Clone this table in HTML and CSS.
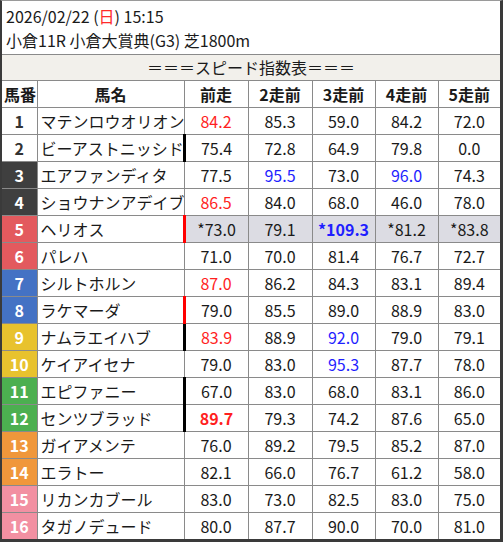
FILE: index.html
```html
<!DOCTYPE html>
<html lang="ja">
<head>
<meta charset="utf-8">
<link rel="stylesheet" href="styles.css">
</head>
<body>
<div class="frame">
  <div class="info">
    <div class="line">2026/02/22 (<span class="sun">日</span>) 15:15</div>
    <div class="line">小倉11R 小倉大賞典(G3) 芝1800m</div>
  </div>
  <table class="speed">
    <colgroup>
      <col class="c-no"><col class="c-name"><col class="c-v1"><col class="c-v2"><col class="c-v3"><col class="c-v4"><col class="c-v5">
    </colgroup>
    <thead>
      <tr class="caption-row"><td colspan="7">＝＝＝スピード指数表＝＝＝</td></tr>
      <tr class="head"><th class="h-no">馬番</th><th>馬名</th><th>前走</th><th>2走前</th><th>3走前</th><th>4走前</th><th>5走前</th></tr>
    </thead>
    <tbody>
      <tr><td class="no w1">1</td><td class="name">マテンロウオリオン</td><td class="red">84.2</td><td>85.3</td><td>59.0</td><td>84.2</td><td>72.0</td></tr>
      <tr><td class="no w1">2</td><td class="name">ビーアストニッシド</td><td class="mk-black">75.4</td><td>72.8</td><td>64.9</td><td>79.8</td><td>0.0</td></tr>
      <tr><td class="no w2">3</td><td class="name">エアファンディタ</td><td>77.5</td><td class="blue">95.5</td><td>73.0</td><td class="blue">96.0</td><td>74.3</td></tr>
      <tr><td class="no w2">4</td><td class="name">ショウナンアデイブ</td><td class="red">86.5</td><td>84.0</td><td>68.0</td><td>46.0</td><td>78.0</td></tr>
      <tr class="hl"><td class="no w3">5</td><td class="name">ヘリオス</td><td class="mk-red">*73.0</td><td>79.1</td><td class="blue bold">*109.3</td><td>*81.2</td><td>*83.8</td></tr>
      <tr><td class="no w3">6</td><td class="name">パレハ</td><td>71.0</td><td>70.0</td><td>81.4</td><td>76.7</td><td>72.7</td></tr>
      <tr><td class="no w4">7</td><td class="name">シルトホルン</td><td class="red">87.0</td><td>86.2</td><td>84.3</td><td>83.1</td><td>89.4</td></tr>
      <tr><td class="no w4">8</td><td class="name">ラケマーダ</td><td class="mk-red">79.0</td><td>85.5</td><td>89.0</td><td>88.9</td><td>83.0</td></tr>
      <tr><td class="no w5">9</td><td class="name">ナムラエイハブ</td><td class="red mk-black">83.9</td><td>88.9</td><td class="blue">92.0</td><td>79.0</td><td>79.1</td></tr>
      <tr><td class="no w5">10</td><td class="name">ケイアイセナ</td><td>79.0</td><td>83.0</td><td class="blue">95.3</td><td>87.7</td><td>78.0</td></tr>
      <tr><td class="no w6">11</td><td class="name">エピファニー</td><td class="mk-black">67.0</td><td>83.0</td><td>68.0</td><td>83.1</td><td>86.0</td></tr>
      <tr><td class="no w6">12</td><td class="name">センツブラッド</td><td class="red bold mk-black">89.7</td><td>79.3</td><td>74.2</td><td>87.6</td><td>65.0</td></tr>
      <tr><td class="no w7">13</td><td class="name">ガイアメンテ</td><td>76.0</td><td>89.2</td><td>79.5</td><td>85.2</td><td>87.0</td></tr>
      <tr><td class="no w7">14</td><td class="name">エラトー</td><td>82.1</td><td>66.0</td><td>76.7</td><td>61.2</td><td>58.0</td></tr>
      <tr><td class="no w8">15</td><td class="name">リカンカブール</td><td>83.0</td><td>73.0</td><td>82.5</td><td>83.0</td><td>75.0</td></tr>
      <tr><td class="no w8">16</td><td class="name">タガノデュード</td><td>80.0</td><td>87.7</td><td>90.0</td><td>70.0</td><td>81.0</td></tr>
    </tbody>
  </table>
</div>
</body>
</html>
```

FILE: styles.css
```css
* { box-sizing: border-box; }
html, body { margin: 0; padding: 0; background: #fff; }
body {
  font-family: "Noto Sans CJK JP", "Noto Sans", sans-serif;
  font-size: 16px;
  color: #1a1a1a;
}
.frame {
  width: 503px;
  height: 542px;
  border-top: 1px solid #9a9a9a;
  border-left: 2px solid #3a3a3a;
  border-right: 3px solid #3a3a3a;
  border-bottom: 3px solid #3a3a3a;
  overflow: hidden;
}
.info {
  padding: 3px 0 1px 4px;
  height: 53px;
}
.line {
  line-height: 24px;
  height: 24px;
}
.sun { color: #ff2a2a; }
.speed {
  width: 498px;
  border-collapse: collapse;
  table-layout: fixed;
}
.c-no { width: 35px; }
.c-name { width: 147px; }
.c-v1 { width: 64px; }
.c-v2 { width: 64px; }
.c-v3 { width: 63px; }
.c-v4 { width: 63px; }
.c-v5 { width: 62px; }
.speed td, .speed th {
  border: 1px solid #8a8a8a;
  height: 27px;
  padding: 0;
  line-height: 25px;
  text-align: center;
  white-space: nowrap;
  overflow: hidden;
}
.speed tr > :first-child { border-left: none; }
.speed tr > :last-child { border-right: none; }
.caption-row td {
  background: #f2f0eb;
  height: 26px;
  border-top: 1px solid #8a8a8a;
}
.head th { font-weight: bold; background: #fff; }
.head .h-no { text-align: left; padding-left: 2px; }
.speed td.name { text-align: left; padding-left: 3px; }
.speed tbody tr:last-child td { border-bottom: none; }
.no { font-weight: bold; color: #fff; }
.w1 { background: #fff; color: #333; }
.w2 { background: #3f3f3f; }
.w3 { background: #e35a5e; }
.w4 { background: #4472c4; }
.w5 { background: #e8c22e; }
.w6 { background: #4caf50; }
.w7 { background: #f0973b; }
.w8 { background: #f290a2; }
.hl td:not(.no):not(.name) { background: #dcdce3; }
.red { color: #ff1f1f; }
.blue { color: #1f1fff; }
.bold { font-weight: bold; }
.speed td.mk-black { border-left: 3px solid #000; }
.speed td.mk-red { border-left: 3px solid #ff0000; }
```
